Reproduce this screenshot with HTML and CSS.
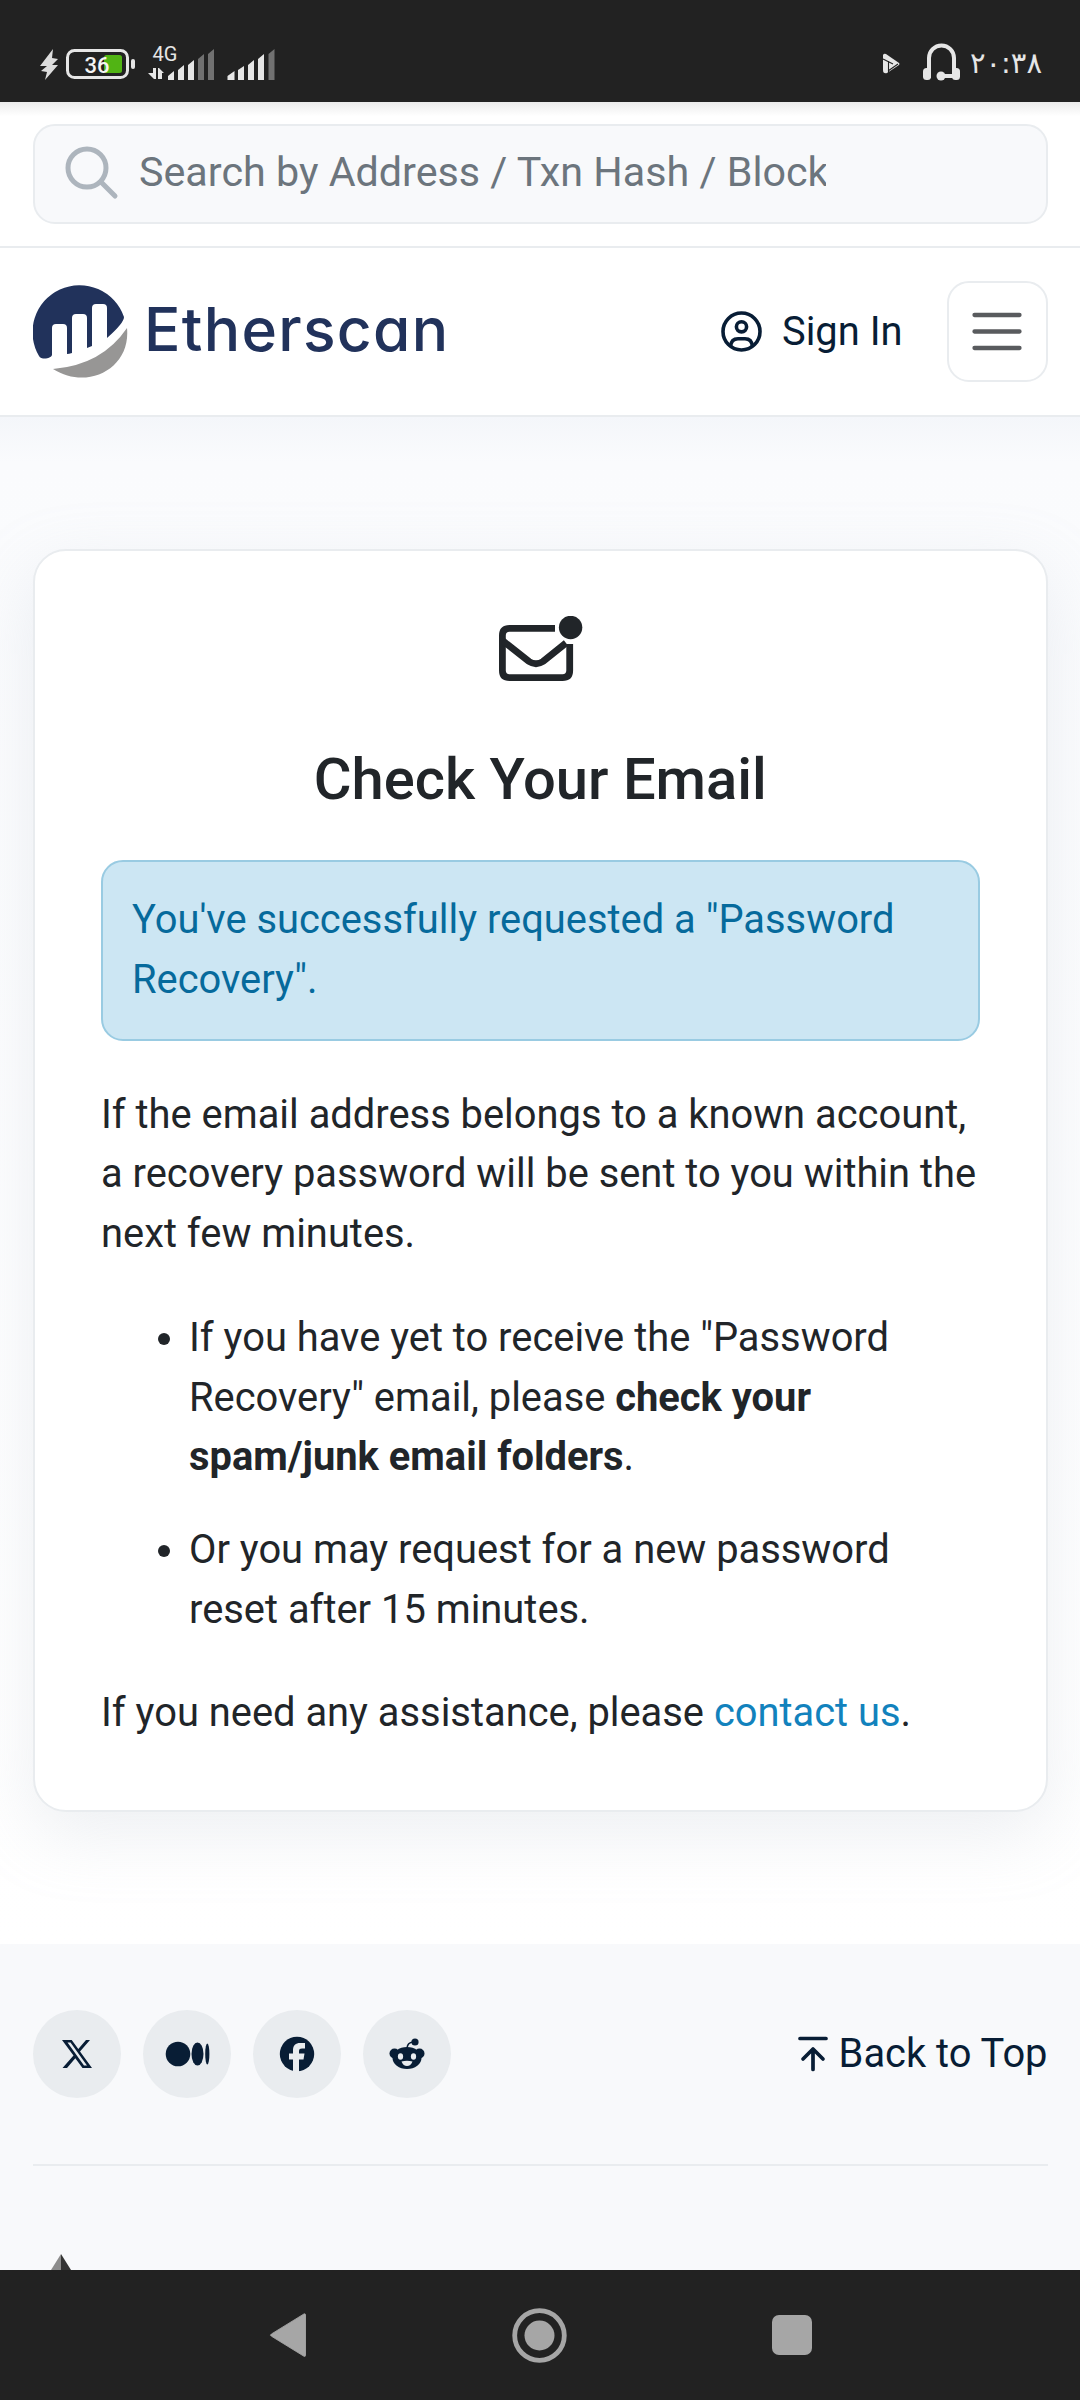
FILE: index.html
```html
<!DOCTYPE html>
<html lang="en">
<head>
<meta charset="utf-8">
<title>Etherscan - Check Your Email</title>
<link rel="stylesheet" href="styles.css">
</head>
<body>
<div class="statusbar">
  <div class="status-left">
    <svg width="242" height="42" viewBox="38 42 242 42">
      <path d="M53 49L40 66h7l-6 5 6 1-2 8 13-15h-6l6-6-6-1z" fill="#ddd"/>
      <rect x="67.5" y="50.500" width="60" height="27" rx="7" fill="none" stroke="#e6e6e6" stroke-width="3"/>
      <rect x="104" y="55" width="18" height="18" rx="2.500" fill="#51b414"/>
      <rect x="131" y="59" width="4" height="10" rx="2" fill="#e6e6e6"/>
      <text x="97" y="72.500" class="battery-text">36</text>
      <text x="165" y="61" class="network-text">4G</text>
      <path d="M153 68h3v11h-2l-6-6h5zM158 68h1l5 5h-2v6h-4z" fill="#e6e6e6"/>
      <g fill="#e6e6e6">
        <path d="M168 76l6-5v9h-6zM178 70l6-5v15h-6zM188 65l6-5v20h-6z"/>
        <path d="M227.500 76l7-5v9h-7zM238 70l6-4v14h-6zM248 65l6-5v20h-6zM258 59l6-5v26h-6z"/>
      </g>
      <path d="M198 59l6-5v26h-6zM208 54l6-5v31h-6zM268.500 54l6-5v31h-6z" fill="#717171"/>
    </svg>
  </div>
  <div class="status-right">
    <svg width="80" height="40" viewBox="884 43 80 40">
      <path d="M886 55q1-2 3-1l13 9q1 1 0 2l-12 8q-4 1-4-3z" fill="#e6e6e6"/>
      <path d="M886 59l10 5M891.500 61v12M891 71l10-7" stroke="#222" stroke-width="1.100" fill="none"/>
      <path d="M932 78V58a12.500 12.500 0 0 1 25 0v20M944 76h14" fill="none" stroke="#e6e6e6" stroke-width="4"/>
      <circle cx="944" cy="76" r="4.500" fill="#e6e6e6"/>
      <rect x="926" y="68" width="8" height="12" rx="3.500" fill="#e6e6e6"/>
      <rect x="955" y="68" width="8" height="12" rx="3.500" fill="#e6e6e6"/>
    </svg>
    <span class="clock">۲۰:۳۸</span>
  </div>
</div>

<div class="searchbar">
  <div class="search-box">
    <svg width="54" height="54" viewBox="0 0 54 54" fill="none" stroke="#adb5bd" stroke-width="5" stroke-linecap="round"><circle cx="22" cy="22" r="19"/><path d="M36 36l14 14"/></svg>
    <span class="placeholder">Search by Address / Txn Hash / Block</span>
  </div>
</div>

<header class="navbar">
  <a class="logo">
    <svg width="95" height="95" viewBox="0 0 95 95">
      <path d="M19 72C18 76 8 77 6 73A47 47 0 1 1 91 34Q91 40 74 55V25q0-4-4-4h-7q-4 0-4 4v38l-5 2V35q0-4-4-4h-7q-4 0-4 4v35q-3 1-5 1V45q0-4-4-4h-7q-4 0-4 4z" fill="#21325b"/>
      <path d="M20 86Q69 82 94 45C98 85 55 108 20 86z" fill="#979695"/>
    </svg>
    <span class="wordmark">Etherscan</span>
  </a>
  <a class="signin">
    <svg width="41" height="41" viewBox="0 0 41 41" fill="none" stroke="#081d35" stroke-width="3.600"><circle cx="20.500" cy="20.500" r="18.500"/><circle cx="20.500" cy="15.800" r="5.100"/><path d="M9.500 35.500C10 30 13 27.700 17 27.700h7C28 27.700 31 30 31.500 35.500"/></svg>
    <span>Sign In</span>
  </a>
  <div class="toggler">
    <svg width="50" height="40" viewBox="0 0 50 40" stroke="#595b5e" stroke-width="4.300" stroke-linecap="round"><path d="M2.500 3H47.500M2.500 19.500H47.500M2.500 36H47.500"/></svg>
  </div>
</header>

<main class="main">
  <section class="card">
    <svg class="mail" width="85" height="66" viewBox="498 616 85 66" fill="none" stroke="#212529" stroke-width="6.800">
      <path d="M555 628.400H509.500Q502.400 628.400 502.400 635.500V670.500Q502.400 677.600 509.500 677.600H562.500Q569.700 677.600 569.700 670.500V644"/>
      <path d="M503 641L529 661.500Q536 666 543 661.500L566 643"/>
      <circle cx="570.600" cy="627.500" r="11.700" fill="#212529" stroke="none"/>
    </svg>
    <h1 class="title">Check Your Email</h1>
    <div class="alert">You've successfully requested a "Password Recovery".</div>
    <p class="text">If the email address belongs to a known account, a recovery password will be sent to you within the next few minutes.</p>
    <ul class="list">
      <li>If you have yet to receive the "Password Recovery" email, please <b>check your spam/junk email folders</b>.</li>
      <li>Or you may request for a new password reset after 15 minutes.</li>
    </ul>
    <p class="text">If you need any assistance, please <a class="link">contact us</a>.</p>
  </section>
</main>

<footer class="footer">
  <div class="footer-row">
    <div class="socials">
      <span class="social"><svg width="32" height="30" viewBox="0 0 32 30"><path fill="#081d35" fill-rule="evenodd" d="M1 1H10.700L17.300 10L25 1H29L19 12.500L31 29H21.500L14.300 19.300L6 29H1.500L12.500 16.500zM6.500 3.500L23 26.500H26L9.500 3.500z"/></svg></span>
      <span class="social"><svg width="45" height="26" viewBox="0 0 45 26" fill="#081d35"><circle cx="13" cy="13" r="12.300"/><ellipse cx="32.500" cy="13" rx="6" ry="11.500"/><ellipse cx="42.300" cy="13" rx="2.100" ry="10.500"/></svg></span>
      <span class="social"><svg width="36" height="36" viewBox="0 0 36 36"><circle cx="18" cy="18" r="17.200" fill="#081d35"/><path fill="#e9ecef" d="M14 36V23.500h-4V17.500h4V14c0-4.500 2.800-7 7-7h5v5.500h-3c-2 0-3 .8-3 2.500v2.500h5.500l-1 6H20V36z"/></svg></span>
      <span class="social"><svg width="36" height="32" viewBox="0 0 36 32"><g fill="#081d35"><circle cx="5.500" cy="15.500" r="5"/><circle cx="30.500" cy="15.500" r="5"/><ellipse cx="18" cy="20" rx="14.500" ry="11"/><circle cx="26" cy="4" r="3.600"/></g><path d="M18 10Q18.500 4.500 24 4" fill="none" stroke="#081d35" stroke-width="1.600"/><g fill="#e9ecef"><ellipse cx="11.500" cy="18.500" rx="2.600" ry="3.200"/><ellipse cx="24.500" cy="18.500" rx="2.600" ry="3.200"/><path d="M12.500 23.500q5.500-1.600 11 0q-1.800 4.500-5.500 4.500t-5.500-4.500z"/></g></svg></span>
    </div>
    <a class="totop"><svg width="30" height="36" viewBox="0 0 30 36" fill="none" stroke="#081d35" stroke-width="3.700" stroke-linecap="round" stroke-linejoin="round"><path d="M2 2.500H28M15 33.500V13M5 23L15 13L25 23"/></svg><span>Back to Top</span></a>
  </div>
  <svg class="eth" width="20" height="32" viewBox="0 0 20 32"><path d="M10 0L-10 32H10z" fill="#8c8c8c"/><path d="M10 0L30 32H10z" fill="#343434"/></svg>
</footer>

<nav class="sysnav">
  <svg width="38" height="60" viewBox="0 0 38 60"><path d="M2.500 28.500L35 2.500Q36.500 2 36.500 3.500V56.500Q36.500 58 35 57.500L2.500 31.500Q.5 30 2.500 28.500z" transform="translate(0 7) scale(1 .77)" fill="#a6a6a6" stroke="#a6a6a6"/></svg>
  <svg width="55" height="55" viewBox="0 0 55 55"><circle cx="27.500" cy="27.500" r="24.800" fill="none" stroke="#a6a6a6" stroke-width="4.800"/><circle cx="27.500" cy="27.500" r="15" fill="#a6a6a6"/></svg>
  <svg width="40" height="40" viewBox="0 0 40 40"><rect width="40" height="40" rx="7" fill="#a6a6a6"/></svg>
</nav>
</body>
</html>
```
FILE: styles.css
```css
* { box-sizing: border-box; }

body {
  margin: 0;
  width: 1080px;
  height: 2400px;
  overflow: hidden;
  display: flex;
  flex-direction: column;
  font-family: Roboto, "Noto Sans", sans-serif;
  font-size: 39.875px;
  line-height: 59.8px;
  color: #212529;
  background: #fff;
}

svg { display: block; flex: none; }

.statusbar {
  height: 102px;
  flex: none;
  background: #222;
  color: #e6e6e6;
  display: flex;
  justify-content: space-between;
  align-items: flex-start;
  padding: 42px 38px 0 38px;
}
.battery-text { font-size: 22px; font-weight: 500; fill: #f4f4f4; text-anchor: middle; }
.network-text { font-size: 20px; fill: #e6e6e6; text-anchor: middle; }
.status-right { display: flex; gap: 9px; margin-top: 1px; }
.clock { font-family: "DejaVu Sans", sans-serif; font-size: 29px; line-height: 40px; letter-spacing: -1.8px; direction: ltr; unicode-bidi: bidi-override; }

.searchbar {
  height: 146px;
  flex: none;
  padding: 22px 32.500px 0 33px;
  background: linear-gradient(#ebebeb, #fff 14px);
  border-bottom: 2px solid #e9ecef;
}
.search-box {
  height: 100px;
  border: 2px solid #e9ecef;
  border-radius: 22px;
  background: #f8f9fb;
  display: flex;
  align-items: center;
  padding: 0 0 3px 30px;
}
.placeholder { width: 687px; margin-left: 20px; overflow: hidden; white-space: nowrap; font-size: 41.25px; color: #6c757d; }

.navbar {
  height: 169px;
  flex: none;
  display: flex;
  align-items: center;
  padding: 0 32.500px 0 33px;
  border-bottom: 2px solid #e9ecef;
}
.logo { display: flex; align-items: center; gap: 16px; margin-right: auto; padding-bottom: 3px; color: #21325b; }
.wordmark { font-family: Inter, sans-serif; font-weight: 500; font-size: 60.500px; letter-spacing: 1.300px; font-feature-settings: "cv11"; }
.signin { display: flex; align-items: center; gap: 20px; color: #081d35; margin-right: 44px; }
.toggler {
  width: 101px;
  height: 101px;
  border: 2px solid #e9ecef;
  border-radius: 22px;
  display: flex;
  align-items: center;
  justify-content: center;
}

.main {
  height: 1527px;
  flex: none;
  padding: 132px 32.500px 0 33px;
  background: linear-gradient(#f4f6fa, #fafbfd 45px, #fff);
}
.card {
  height: 1263px;
  padding: 65px 66px 0;
  background: #fff;
  border: 2px solid #e9ecef;
  border-radius: 33px;
  box-shadow: 0 22px 66px rgba(189, 197, 209, .25);
}
.mail { margin: 0 auto; }
.title { margin: 63px 0 47px; text-align: center; font-size: 57.900px; line-height: 68px; font-weight: 500; }
.alert {
  height: 181px;
  padding: 28px 29px;
  color: #066a9c;
  background: #cce6f3;
  border: 2px solid #99cbe2;
  border-radius: 22px;
}
.text { margin: 43.500px 0 0; }
.list { margin: 44px 0 0; padding-left: 88px; }
.list li + li { margin-top: 33px; }
.link { color: #1282bd; }

.footer {
  height: 326px;
  flex: none;
  overflow: hidden;
  padding: 66px 32.500px 0 33px;
  background: #f8f9fb;
}
.footer-row {
  display: flex;
  justify-content: space-between;
  align-items: flex-start;
  height: 156px;
  border-bottom: 2px solid #e9ecef;
}
.socials { display: flex; gap: 22px; }
.social {
  width: 88px;
  height: 88px;
  border-radius: 50%;
  background: #e9ecef;
  display: flex;
  align-items: center;
  justify-content: center;
}
.totop { display: flex; align-items: center; gap: 11px; height: 87px; color: #081d35; }
.eth { margin: 88px 0 0 17.500px; }

.sysnav {
  height: 130px;
  flex: none;
  background: #222;
  display: flex;
  align-items: center;
  padding-left: 269px;
  gap: 205px;
}
```
